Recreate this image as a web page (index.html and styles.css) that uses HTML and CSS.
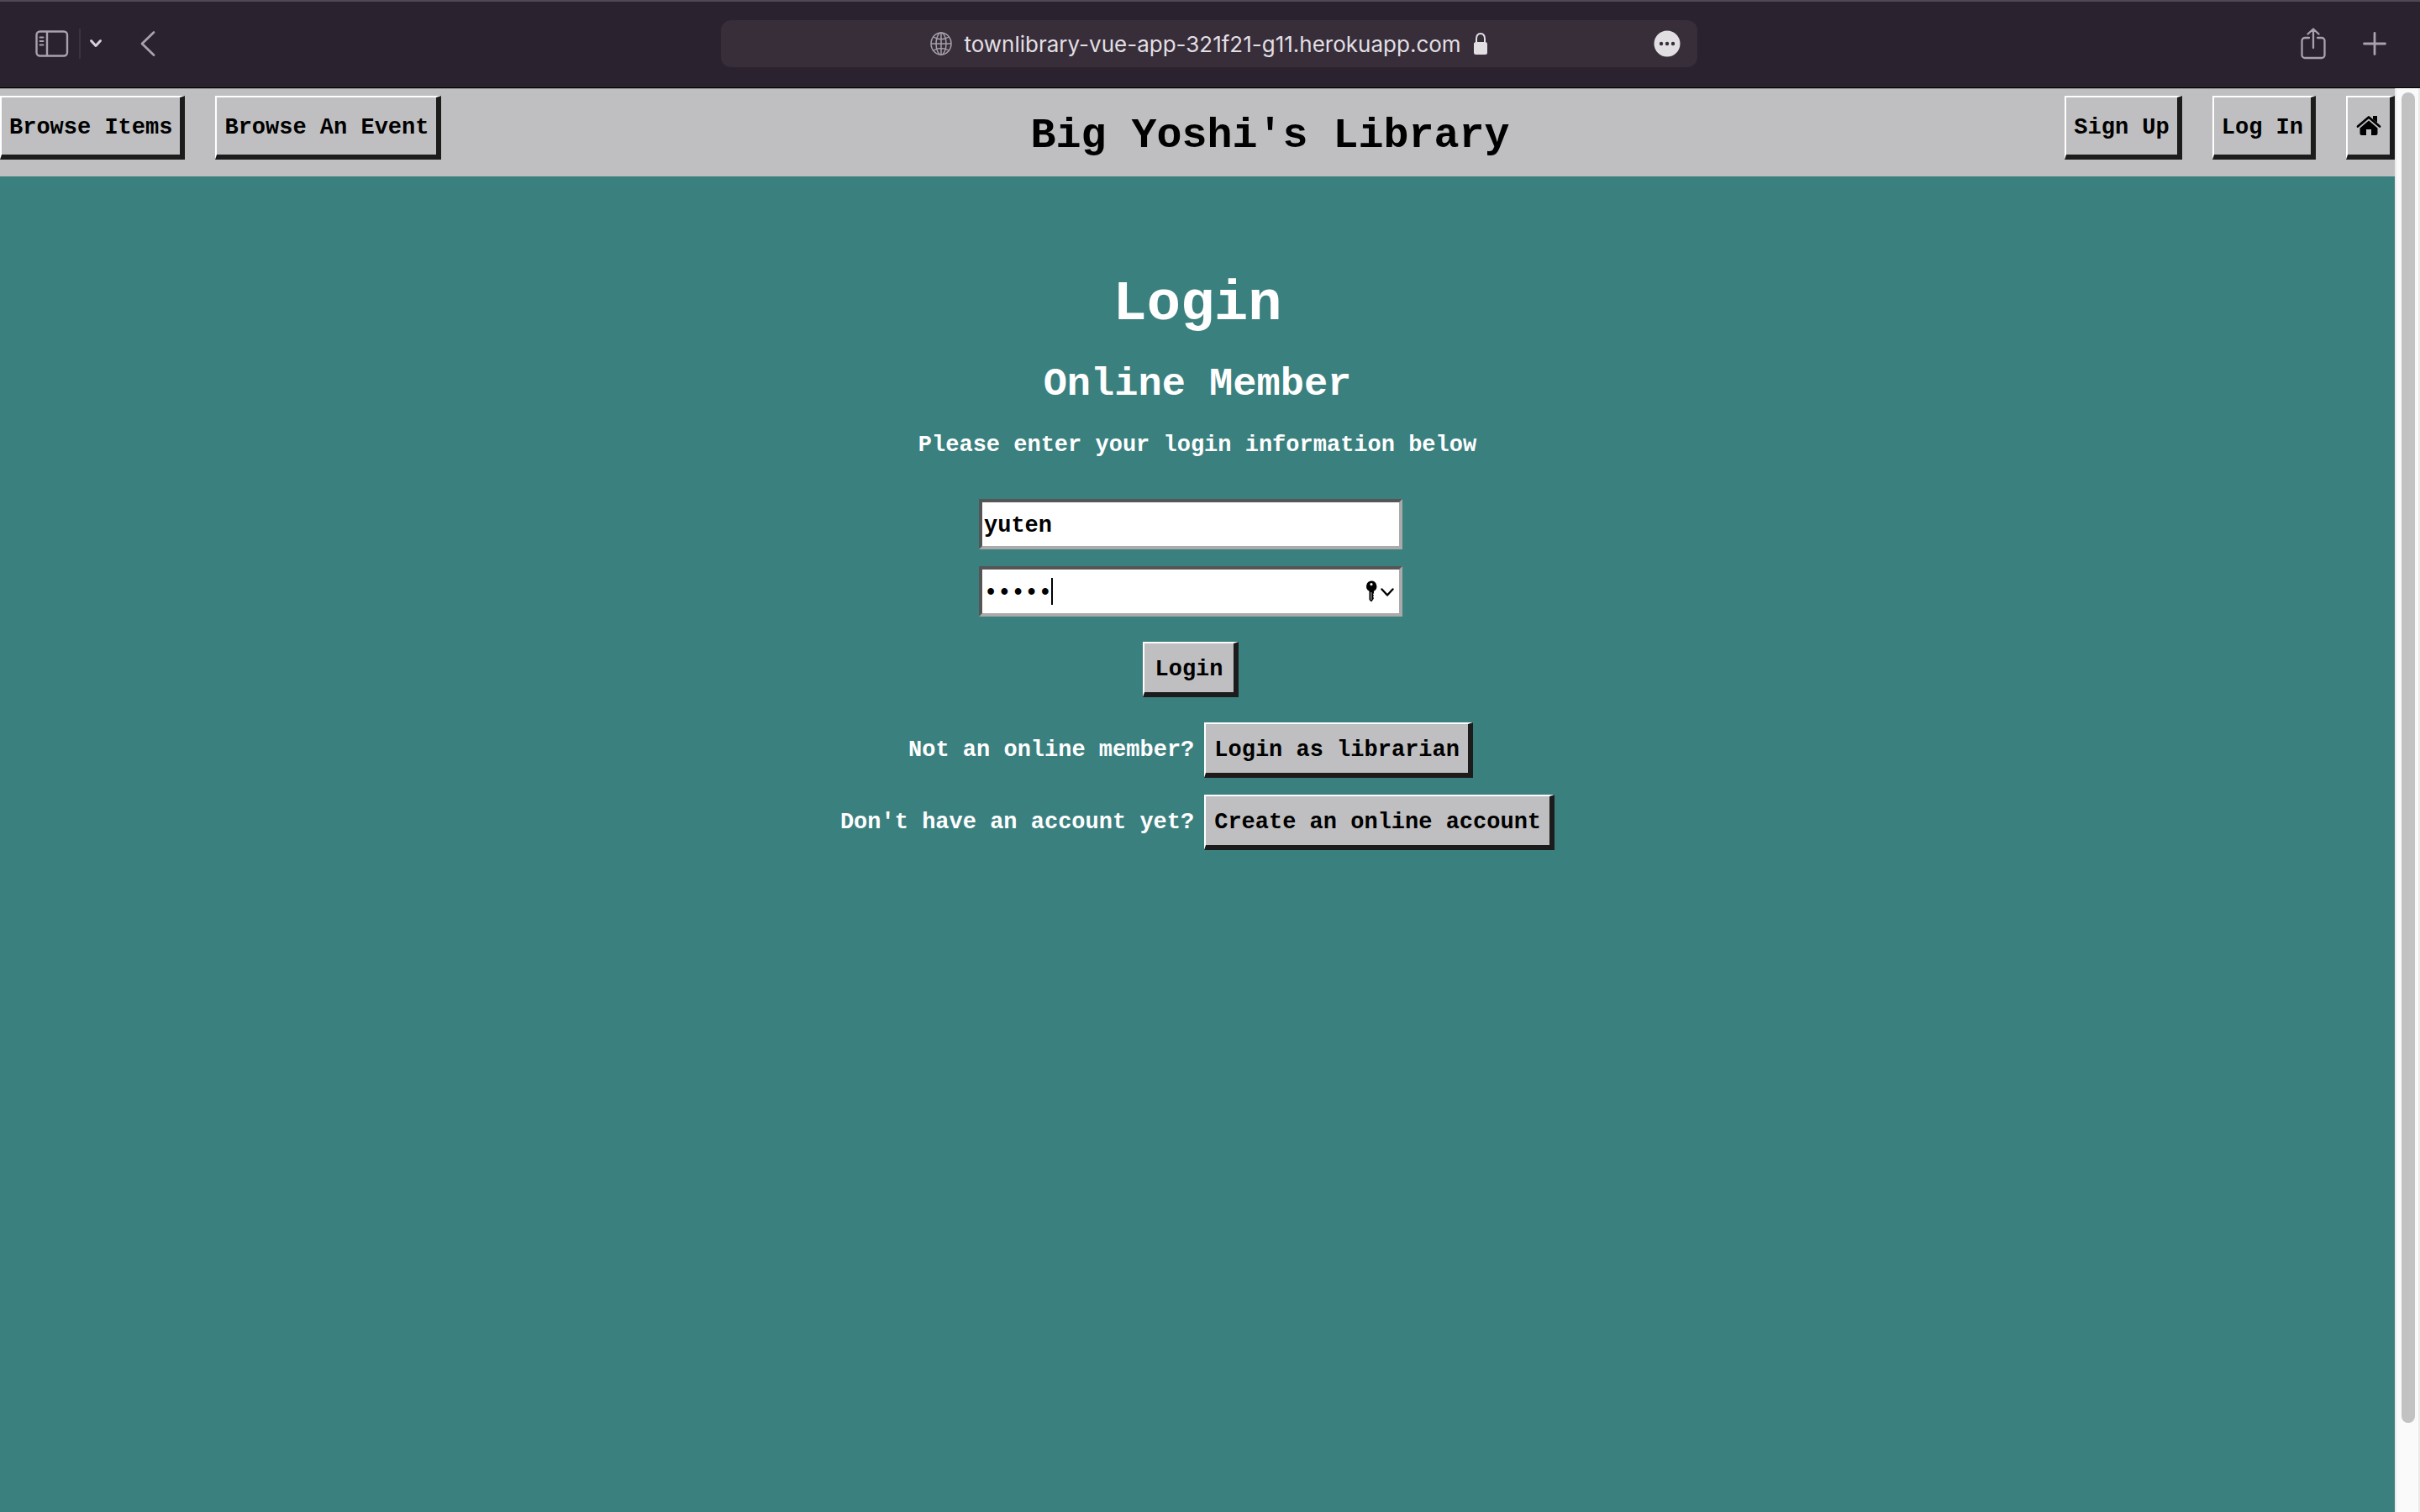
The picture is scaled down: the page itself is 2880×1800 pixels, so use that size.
FILE: index.html
```html
<!DOCTYPE html>
<html lang="en">
<head>
<meta charset="utf-8">
<title>Big Yoshi's Library</title>
<link rel="stylesheet" href="styles.css">
</head>
<body>
<div class="toolbar">
  <div class="toolbar-side">
    <button class="tool tool-sidebar" aria-label="Sidebar">
      <svg width="40" height="32" viewBox="0 0 40 32" fill="none" stroke="currentColor" stroke-width="2.4" stroke-linecap="round"><rect x="1.5" y="1.5" width="36.500" height="29" rx="4"/><path d="M14 2v28"/><path d="M5.500 8.500h4M5.500 13h4M5.500 17.500h4" stroke-width="1.800"/></svg>
    </button>
    <span class="tool-divider"></span>
    <button class="tool tool-menu" aria-label="Tab groups">
      <svg width="16" height="12" viewBox="0 0 16 12" fill="none" stroke="currentColor" stroke-width="3" stroke-linecap="round" stroke-linejoin="round"><path d="M2.500 2.500 8 8.500l5.500-6"/></svg>
    </button>
    <button class="tool tool-back" aria-label="Back">
      <svg width="18" height="32" viewBox="0 0 18 32" fill="none" stroke="currentColor" stroke-width="2.800" stroke-linecap="round" stroke-linejoin="round"><path d="M16 2.500 2 16l14 13.500"/></svg>
    </button>
  </div>
  <div class="address">
    <div class="address-main">
      <svg class="globe" width="26" height="28" viewBox="0 0 26 28" fill="none" stroke="currentColor" stroke-width="1.500"><ellipse cx="13" cy="14" rx="12" ry="13"/><ellipse cx="13" cy="14" rx="6" ry="13"/><path d="M13 1v26M1 14h24M4 6c5 3.500 13 3.500 18 0M4 22c5-3.500 13-3.500 18 0"/></svg>
      <input class="url" type="text" aria-label="Address" size="36" value="townlibrary-vue-app-321f21-g11.herokuapp.com">
      <svg width="18" height="28" viewBox="0 0 18 28"><path d="M4 13V8.500C4 4.500 6 2 9 2s5 2.500 5 6.500V13" fill="none" stroke="currentColor" stroke-width="2"/><rect x="1" y="12" width="16" height="15" rx="2.500" fill="currentColor"/></svg>
    </div>
    <button class="more" aria-label="Page options">
      <svg width="32" height="32" viewBox="0 0 32 32"><circle cx="16" cy="16" r="15.500" fill="currentColor"/><g fill="#382e3a"><circle cx="9" cy="16" r="2.200"/><circle cx="16" cy="16" r="2.200"/><circle cx="23" cy="16" r="2.200"/></g></svg>
    </button>
  </div>
  <div class="toolbar-side toolbar-end">
    <button class="tool" aria-label="Share">
      <svg width="30" height="38" viewBox="0 0 30 38" fill="none" stroke="currentColor" stroke-width="2.300" stroke-linecap="round" stroke-linejoin="round"><path d="M10 12H5a3.500 3.500 0 0 0-3.500 3.500v17A3.500 3.500 0 0 0 5 36h20a3.500 3.500 0 0 0 3.500-3.500v-17A3.500 3.500 0 0 0 25 12h-5M15 24V2M8.500 7.500 15 1.500l6.500 6"/></svg>
    </button>
    <button class="tool" aria-label="New tab">
      <svg width="28" height="28" viewBox="0 0 28 28" fill="none" stroke="currentColor" stroke-width="2.800" stroke-linecap="round"><path d="M14 1.500v25M1.500 14h25"/></svg>
    </button>
  </div>
</div>
<div class="window">
  <div class="page">
    <header class="header">
      <nav class="nav">
        <button class="btn btn-nav">Browse Items</button>
        <button class="btn btn-nav">Browse An Event</button>
      </nav>
      <div class="brand">Big Yoshi's Library</div>
      <nav class="nav">
        <button class="btn btn-nav">Sign Up</button>
        <button class="btn btn-nav">Log In</button>
        <button class="btn btn-nav btn-home" aria-label="Home">
          <svg width="30" height="26" viewBox="0 0 30 26"><path d="M20 1h5v8l-5-4z" fill="currentColor"/><path d="M2 13.500 15 2.500l13 11" fill="none" stroke="currentColor" stroke-width="2.800" stroke-linecap="round" stroke-linejoin="round"/><path d="M15 6.500 4.500 15.500V22a2 2 0 0 0 2 2H12v-7h6v7h5.500a2 2 0 0 0 2-2v-6.500z" fill="currentColor"/></svg>
        </button>
      </nav>
    </header>
    <main class="main">
      <h1 class="title">Login</h1>
      <h2 class="subtitle">Online Member</h2>
      <p class="lead">Please enter your login information below</p>
      <form class="form">
        <input class="field" type="text" aria-label="Username" value="yuten">
        <div class="password">
          <input class="field" type="password" aria-label="Password" value="yuten">
          <span class="caret"></span>
          <button class="keychain" type="button" aria-label="Saved passwords">
            <svg width="34" height="26" viewBox="0 0 34 26"><path fill-rule="evenodd" d="M7 .5a6.500 6.500 0 0 1 3 12.200V15l-1 1.500 1 1.500-1 1.500 1 1.500-1 2-2 2.500-2.500-2.500V12.700A6.500 6.500 0 0 1 7 .5zm0 2.500a1.600 1.600 0 1 0 0 3.200A1.600 1.600 0 0 0 7 3zm-.5 11v9h.8v-9z"/><path d="m19.500 10.500 6.500 7 6.500-7" fill="none" stroke="currentColor" stroke-width="2.400" stroke-linecap="round" stroke-linejoin="round"/></svg>
          </button>
        </div>
        <button class="btn btn-submit" type="button">Login</button>
      </form>
      <div class="row row-member">
        <span>Not an online member?</span>
        <button class="btn">Login as librarian</button>
      </div>
      <div class="row">
        <span>Don't have an account yet?</span>
        <button class="btn">Create an online account</button>
      </div>
    </main>
  </div>
  <div class="scrollbar"><div class="thumb"></div></div>
</div>
</body>
</html>
```
FILE: styles.css
```css
* {
  box-sizing: border-box;
}

body {
  margin: 0;
  min-height: 100vh;
  display: flex;
  flex-direction: column;
  background: #3a807f;
  font: bold 27px/32px "Liberation Mono", monospace;
}

button {
  font: inherit;
  color: inherit;
}

svg {
  display: block;
}

/* Browser toolbar */
.toolbar {
  display: flex;
  align-items: center;
  height: 105px;
  padding: 0 40px 2px 38px;
  border-top: 2px solid #4f4953;
  border-bottom: 1px solid #000;
  background: #2a222e;
  color: #aaa0ae;
}

.toolbar-side {
  flex: 1;
  display: flex;
  align-items: center;
}

.toolbar-end {
  justify-content: flex-end;
  gap: 44px;
}

.tool,
.more {
  padding: 0;
  border: 0;
  background: none;
}

.tool-sidebar {
  margin-left: 4px;
}

.tool-divider {
  width: 2px;
  height: 36px;
  margin: 0 10px 0 12px;
  background: #3b333f;
}

.tool-menu {
  color: #d8cfdc;
}

.tool-back {
  margin-left: 45px;
}

.address {
  display: grid;
  grid-template-columns: 1fr auto 1fr;
  align-items: center;
  width: 41.5%;
  height: 56px;
  padding: 0 20px;
  border-radius: 12px;
  background: #372e3a;
  color: #e2dfe3;
}

.address-main {
  grid-column: 2;
  display: flex;
  align-items: center;
  gap: 14px;
}

.globe {
  color: #a59fa7;
}

.url {
  field-sizing: content;
  padding: 2px 0 0;
  border: 0;
  background: none;
  color: inherit;
  font: 26px/32px Inter, sans-serif;
}

.more {
  justify-self: end;
}

/* Window area */
.window {
  flex: 1;
  display: flex;
}

.page {
  flex: 1;
  color: #fff;
}

.scrollbar {
  width: 30px;
  padding: 5px 4px 0 6px;
  border-left: 2px solid #ebebeb;
  border-right: 2px solid #ebebeb;
  background: #fafafa;
}

.thumb {
  width: 16px;
  height: calc(100% - 106px);
  border-radius: 8px;
  background: #c2c2c2;
}

/* Library header */
.header {
  display: flex;
  align-items: flex-start;
  height: 105px;
  padding-top: 8px;
  border-top: 1px solid #98989a;
  background: #bfbfc1;
  color: #000;
}

.nav {
  display: flex;
  gap: 36px;
}

.brand {
  flex: 1;
  padding: 18px 0 0 40px;
  font-size: 50px;
  line-height: 60px;
  text-align: center;
}

.btn {
  min-height: 66px;
  padding: 4px 10px 0;
  border: 2px solid #fff;
  border-right: 6px solid #1c1c1c;
  border-bottom: 6px solid #1c1c1c;
  background: #bfbfc1;
  color: #000;
  white-space: nowrap;
}

.btn-nav {
  min-height: 76px;
  padding: 4px 9px 0;
}

.btn-home {
  padding: 0 10px;
}

/* Login page */
.main {
  display: flex;
  flex-direction: column;
  align-items: center;
  padding: 112px 0 60px;
}

.title {
  margin: 0 0 28px;
  font-size: 67px;
  line-height: 80px;
}

.subtitle {
  margin: 0 0 28px;
  font-size: 47px;
  line-height: 56px;
}

.lead {
  margin: 0 0 48px;
}

.form {
  display: flex;
  flex-direction: column;
  align-items: center;
  gap: 20px;
  padding-right: 16px;
  color: #000;
}

.field {
  display: block;
  width: 504px;
  height: 60px;
  padding: 4px 2px 0;
  border: 4px solid #555;
  border-right-color: #aaa;
  border-bottom-color: #aaa;
  background: #fff;
  color: #000;
  font: inherit;
}

.password {
  position: relative;
}

.caret {
  position: absolute;
  top: 14px;
  left: 86px;
  width: 2px;
  height: 32px;
  background: #000;
}

.keychain {
  position: absolute;
  top: 17px;
  right: 10px;
  padding: 0;
  border: 0;
  background: none;
}

.btn-submit {
  margin: 10px 0 30px;
  padding: 4px 12px 0;
}

.row {
  display: flex;
  align-items: baseline;
  gap: 12px;
  margin-bottom: 20px;
}

.row-member {
  padding-right: 16px;
}
```
